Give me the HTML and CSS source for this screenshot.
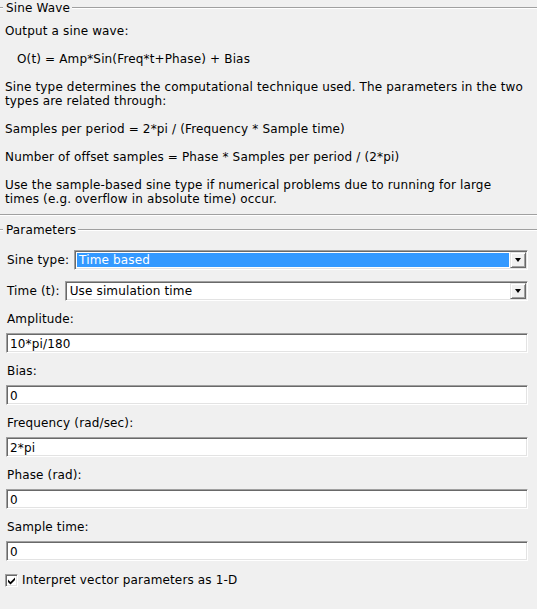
FILE: index.html
```html
<!DOCTYPE html>
<html>
<head>
<meta charset="utf-8">
<link rel="stylesheet" href="styles.css">
</head>
<body>
<div class="dialog">
  <div class="group-title"><span class="rule short"></span><span class="title-text">Sine Wave</span><span class="rule long"></span></div>
  <div class="desc">
    <p>Output a sine wave:</p>
    <p class="indent">O(t) = Amp*Sin(Freq*t+Phase) + Bias</p>
    <p>Sine type determines the computational technique used. The parameters in the two<br>types are related through:</p>
    <p>Samples per period = 2*pi / (Frequency * Sample time)</p>
    <p>Number of offset samples = Phase * Samples per period / (2*pi)</p>
    <p>Use the sample-based sine type if numerical problems due to running for large<br>times (e.g. overflow in absolute time) occur.</p>
  </div>
  <div class="separator"></div>
  <div class="group-title params"><span class="rule short"></span><span class="title-text">Parameters</span><span class="rule long"></span></div>
  <div class="params-body">
    <div class="select-row first">
      <span class="label">Sine type:</span>
      <div class="combo focused">
        <div class="combo-text"><span class="sel">Time based</span></div>
        <div class="combo-btn"><span class="tri"></span></div>
      </div>
    </div>
    <div class="select-row">
      <span class="label">Time (t):</span>
      <div class="combo">
        <div class="combo-text">Use simulation time</div>
        <div class="combo-btn"><span class="tri"></span></div>
      </div>
    </div>
    <div class="field"><div class="label">Amplitude:</div><div class="edit">10*pi/180</div></div>
    <div class="field"><div class="label">Bias:</div><div class="edit">0</div></div>
    <div class="field"><div class="label">Frequency (rad/sec):</div><div class="edit">2*pi</div></div>
    <div class="field"><div class="label">Phase (rad):</div><div class="edit">0</div></div>
    <div class="field"><div class="label">Sample time:</div><div class="edit">0</div></div>
    <div class="check-row">
      <span class="checkbox"><svg width="9" height="9" viewBox="0 0 9 9"><path d="M1 3.5 L3.5 6 L8 1.5 L8 4 L3.5 8.5 L1 6 Z" fill="#000"/></svg></span>
      <span>Interpret vector parameters as 1-D</span>
    </div>
  </div>
</div>
</body>
</html>
```

FILE: styles.css
```css
html, body {
  margin: 0;
  padding: 0;
  background: #f0f0f0;
}
body {
  width: 537px;
  height: 609px;
  overflow: hidden;
  font-family: "DejaVu Sans", sans-serif;
  font-size: 12px;
  letter-spacing: 0.15px;
  color: #000;
}
.dialog {
  display: flex;
  flex-direction: column;
}
.group-title {
  display: flex;
  align-items: center;
  height: 16px;
  line-height: 16px;
}
.rule {
  height: 0;
  border-top: 1px solid #a0a0a0;
  border-bottom: 1px solid #ffffff;
}
.rule.short {
  width: 3px;
}
.rule.long {
  flex: 1;
}
.title-text {
  padding: 0 2px 0 3px;
}
.desc {
  padding: 8px 4px 0 5px;
  white-space: nowrap;
}
.desc p {
  margin: 0 0 14px 0;
  line-height: 14px;
}
.desc p:last-child {
  margin-bottom: 8px;
}
.desc p.indent {
  padding-left: 12px;
}
.separator {
  height: 0;
  border-top: 1px solid #a0a0a0;
  border-bottom: 1px solid #ffffff;
}
.params {
  margin-top: 6px;
}
.params-body {
  padding: 12px 9px 0 6px;
  display: flex;
  flex-direction: column;
}
.select-row {
  display: flex;
  align-items: center;
  height: 20px;
  margin-bottom: 11px;
}
.select-row .label {
  padding-left: 1px;
  margin-right: 5px;
}
.combo {
  flex: 1;
  height: 20px;
  box-sizing: border-box;
  background: #fff;
  border-top: 1px solid #a0a0a0;
  border-left: 1px solid #a0a0a0;
  border-right: 1px solid #fff;
  border-bottom: 1px solid #fff;
  box-shadow: inset 1px 1px 0 #696969, inset -1px -1px 0 #e3e3e3;
  display: flex;
  align-items: stretch;
  padding: 2px;
}
.combo-text {
  flex: 1;
  line-height: 14px;
  padding-left: 2px;
  display: flex;
}
.combo.focused .combo-text {
  padding-left: 0;
}
.sel {
  flex: 1;
  background: #3399ff;
  color: #fff;
  padding-left: 2px;
}
.combo-btn {
  width: 16px;
  box-sizing: border-box;
  background: #f0f0f0;
  border-top: 1px solid #e3e3e3;
  border-left: 1px solid #e3e3e3;
  border-right: 1px solid #696969;
  border-bottom: 1px solid #696969;
  box-shadow: inset 1px 1px 0 #fff, inset -1px -1px 0 #a0a0a0;
  display: flex;
  align-items: center;
  justify-content: center;
  margin: -1px -1px -1px 1px;
}
.tri {
  width: 0;
  height: 0;
  border-left: 3.5px solid transparent;
  border-right: 3.5px solid transparent;
  border-top: 4px solid #000;
}
.field {
  display: flex;
  flex-direction: column;
  margin-bottom: 11px;
}
.field .label {
  line-height: 14px;
  height: 14px;
  padding-left: 1px;
  margin-bottom: 7px;
}
.edit {
  height: 20px;
  box-sizing: border-box;
  background: #fff;
  border-top: 1px solid #a0a0a0;
  border-left: 1px solid #a0a0a0;
  border-right: 1px solid #fff;
  border-bottom: 1px solid #fff;
  box-shadow: inset 1px 1px 0 #696969, inset -1px -1px 0 #e3e3e3;
  line-height: 16px;
  padding: 2px 0 0 3px;
}
.check-row {
  display: flex;
  align-items: center;
  height: 14px;
  margin-top: 1px;
}
.checkbox {
  width: 13px;
  height: 13px;
  box-sizing: border-box;
  background: #fff;
  border-top: 1px solid #a0a0a0;
  border-left: 1px solid #a0a0a0;
  border-right: 1px solid #fff;
  border-bottom: 1px solid #fff;
  box-shadow: inset 1px 1px 0 #696969, inset -1px -1px 0 #e3e3e3;
  display: flex;
  align-items: center;
  justify-content: center;
  margin-right: 4px;
  margin-left: -1px;
}
```
